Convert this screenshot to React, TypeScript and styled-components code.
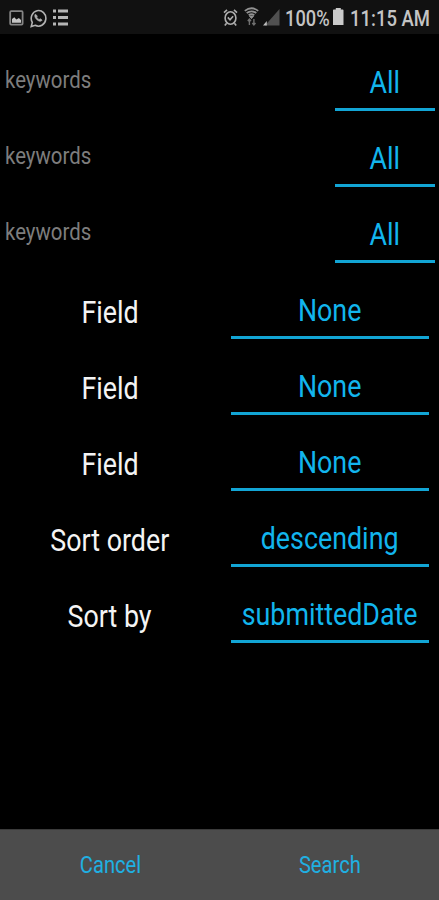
import React from "react";
import styled, { createGlobalStyle } from "styled-components";

const GlobalStyle = createGlobalStyle`
  *, *::before, *::after { box-sizing: border-box; }
  body { margin: 0; background: #000; font-family: Roboto, "Liberation Sans", sans-serif; }
`;

const Screen = styled.div`
  width: 439px;
  height: 900px;
  display: flex;
  flex-direction: column;
  background: #000;
  overflow: hidden;
`;

const StatusBar = styled.header`
  height: 34px;
  flex: none;
  display: flex;
  justify-content: space-between;
  background: #111;
  color: #c4c4c4;
`;

const StatusGroup = styled.div`
  display: flex;
  align-items: flex-start;
`;

const StatusIcon = styled.svg<{ $left: number; $top: number }>`
  display: block;
  flex: none;
  margin-left: ${(p) => p.$left}px;
  margin-top: ${(p) => p.$top}px;
`;

const StatusText = styled.div<{ $width: number; $left: number }>`
  width: ${(p) => p.$width}px;
  margin-left: ${(p) => p.$left}px;
  padding-top: 6px;
  font-size: 22px;
  font-weight: 500;
  line-height: 26px;
  white-space: nowrap;
`;

const Condensed = styled.span<{ $scale?: number; $origin?: string }>`
  display: inline-block;
  white-space: nowrap;
  transform: scaleX(${(p) => p.$scale ?? 0.865});
  transform-origin: ${(p) => p.$origin ?? "center"};
`;

const Form = styled.main`
  flex: 1;
  padding-top: 1px;
`;

const KeywordRow = styled.div`
  height: 75.95px;
  display: flex;
  justify-content: space-between;
  padding: 0 4px 0 5px;
`;

const Keyword = styled.label`
  padding-top: 31px;
  font-size: 24px;
  line-height: 28px;
  color: #7d7d7d;
`;

const OptionRow = styled.div`
  height: 75.95px;
  display: grid;
  grid-template-columns: 220px 199px;
  column-gap: 11px;
`;

const OptionLabel = styled.div`
  padding-top: 32px;
  text-align: center;
  font-size: 31px;
  line-height: 36px;
  color: #f4f4f4;
`;

const Picker = styled.div<{ $width: number }>`
  width: ${(p) => p.$width}px;
  height: 100%;
  padding-top: 30px;
  display: flex;
  justify-content: center;
  border-bottom: 3px solid #12a5d5;
  font-size: 31px;
  line-height: 36px;
  color: #12b5ed;
`;

const Footer = styled.footer`
  height: 71px;
  flex: none;
  display: grid;
  grid-template-columns: 1fr 1fr;
  background: #4c4c4c;
  border-top: 1px solid #3b3b3b;
`;

const Action = styled.button`
  border: 0;
  padding: 21px 0 0 1px;
  display: flex;
  align-items: flex-start;
  justify-content: center;
  background: transparent;
  font-family: inherit;
  font-size: 24px;
  line-height: 28px;
  color: #20b0e2;
`;

const options = [
  { label: "Field", value: "None" },
  { label: "Field", value: "None" },
  { label: "Field", value: "None" },
  { label: "Sort order", value: "descending" },
  { label: "Sort by", value: "submittedDate" },
];

export default function App() {
  return (
    <Screen>
      <GlobalStyle />
      <StatusBar>
        <StatusGroup>
          <StatusIcon $left={9} $top={10} width="15" height="16" viewBox="0 0 15 16">
            <rect x="1.2" y="1.2" width="12.4" height="13.4" rx="1" fill="none" stroke="#858585" strokeWidth="1.8" />
            <path d="M3 12.8V9l2.3-1.7L7.4 9.6l2.5-1.5L12 10v2.8z" fill="#c4c4c4" />
          </StatusIcon>
          <StatusIcon $left={6} $top={9} width="17" height="19" viewBox="0 0 17 19" fill="none" stroke="#b2b2b2">
            <path d="M1.2 17.6l1.1-4.2A7.3 7.8 0 1 1 5.2 16.3z" strokeWidth="1.6" />
            <path d="M5.3 5.2c-1.4 1.9.4 4.7 2.3 6 1.7 1.3 3.7 1.6 4.5-.1l-1.9-1.4-1 .9c-1.3-.5-2.1-1.5-2.6-2.6l.8-1z" fill="#b2b2b2" strokeWidth=".7" />
          </StatusIcon>
          <StatusIcon $left={6} $top={9} width="15" height="17" viewBox="0 0 15 17" fill="#b5b5b5">
            <path d="M0 .5h3v3H0zM5 .5h10v3H5zM0 7h3v3H0zM5 7h10v3H5zM0 13.5h3v3H0zM5 13.5h10v3H5z" />
          </StatusIcon>
        </StatusGroup>
        <StatusGroup>
          <StatusIcon $left={0} $top={8} width="15" height="19" viewBox="0 0 15 19" fill="none" stroke="#adadad" strokeWidth="1.6">
            <ellipse cx="7.5" cy="10" rx="5.4" ry="6.2" />
            <path d="M1 4.6l3-2.8M14 4.6l-3-2.8M3.6 15.2l-1.8 2.3M11.4 15.2l1.8 2.3M4.8 9.4l2.2 2.4 3.1-3.6" />
          </StatusIcon>
          <StatusIcon $left={6} $top={7} width="15" height="19" viewBox="0 0 15 19" fill="none" stroke="#929292">
            <path d="M.8 3.9Q7.5-1.3 14.2 3.9M2.7 6.1q4.8-3.5 9.6 0M4.7 8.2q2.8-2 5.6 0" strokeWidth="1.8" />
            <path d="M5.5 9h4l-2 2.6z" fill="#929292" />
            <path d="M5.4 18v-5.7M3.8 14l1.6-1.9L7 14M9.9 12v5.7M8.3 16l1.6 1.9 1.6-1.9" stroke="#707070" strokeWidth="1.4" />
          </StatusIcon>
          <StatusIcon $left={4} $top={8} width="17" height="18" viewBox="0 0 17 18">
            <path d="M16.5 1v16.5H2z" fill="#505050" />
            <path d="M0 17.5L3.8 13v4.5z" fill="#bdbdbd" />
          </StatusIcon>
          <StatusText $width={46} $left={5}>
            <Condensed $scale={0.83} $origin="left">100%</Condensed>
          </StatusText>
          <StatusIcon $left={2} $top={8} width="11" height="18" viewBox="0 0 11 18">
            <path d="M0 2.2q0-.8.8-.8h2V0h5v1.4h1.8q.9 0 .9.8V17H0z" fill="#cacaca" />
          </StatusIcon>
          <StatusText $width={89} $left={6}>
            <Condensed $scale={0.84} $origin="left">11:15 AM</Condensed>
          </StatusText>
        </StatusGroup>
      </StatusBar>
      <Form>
        {[0, 1, 2].map((row) => (
          <KeywordRow key={row}>
            <Keyword><Condensed $scale={0.85} $origin="left">keywords</Condensed></Keyword>
            <Picker $width={100}><Condensed>All</Condensed></Picker>
          </KeywordRow>
        ))}
        {options.map((option, index) => (
          <OptionRow key={index}>
            <OptionLabel><Condensed>{option.label}</Condensed></OptionLabel>
            <Picker $width={198}><Condensed>{option.value}</Condensed></Picker>
          </OptionRow>
        ))}
      </Form>
      <Footer>
        <Action><Condensed $scale={0.84}>Cancel</Condensed></Action>
        <Action><Condensed $scale={0.84}>Search</Condensed></Action>
      </Footer>
    </Screen>
  );
}
